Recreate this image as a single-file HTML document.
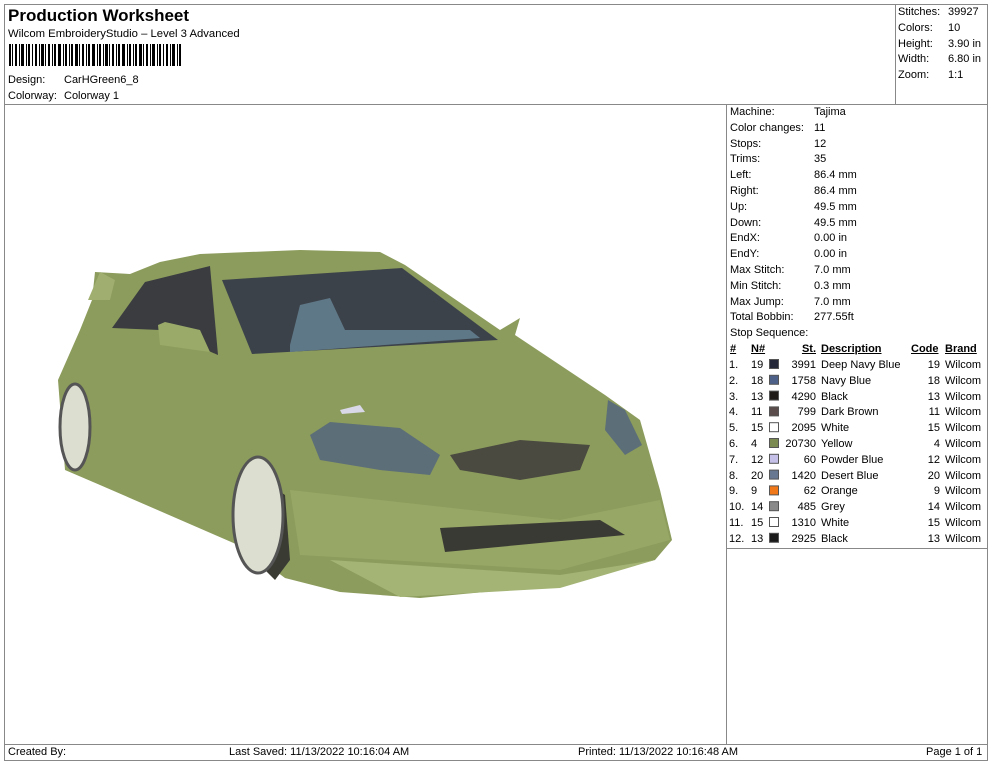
<!DOCTYPE html>
<html><head><meta charset="utf-8"><style>
*{margin:0;padding:0;box-sizing:border-box}
body{width:990px;height:762px;background:#fff;font-family:"Liberation Sans",Arial,sans-serif;color:#000;position:relative;overflow:hidden;font-size:11px}
.a{position:absolute;white-space:nowrap}
.l{position:absolute;background:#888}
.t{position:absolute;font-size:11px;line-height:15.8px}
.r{text-align:right}
u{text-decoration:underline}
</style></head><body>
<div class="l" style="left:4px;top:4px;width:984px;height:1px"></div>
<div class="l" style="left:4px;top:4px;width:1px;height:757px"></div>
<div class="l" style="left:987px;top:4px;width:1px;height:757px"></div>
<div class="l" style="left:4px;top:760px;width:984px;height:1px"></div>
<div class="l" style="left:4px;top:104px;width:984px;height:1px"></div>
<div class="l" style="left:895px;top:4px;width:1px;height:100px"></div>
<div class="l" style="left:726px;top:104px;width:1px;height:640px"></div>
<div class="l" style="left:726px;top:548px;width:262px;height:1px"></div>
<div class="l" style="left:4px;top:744px;width:984px;height:1px"></div>

<div class="a" style="left:8px;top:6px;font-size:17px;font-weight:bold">Production Worksheet</div>
<div class="a" style="left:8px;top:28px;font-size:11.3px">Wilcom EmbroideryStudio – Level 3 Advanced</div>
<svg class="a" style="left:9px;top:44px" width="174" height="22">
<g fill="#000">
<rect x="0" y="0" width="2" height="22"/><rect x="3" y="0" width="1" height="22"/><rect x="6" y="0" width="2" height="22"/><rect x="10" y="0" width="1" height="22"/><rect x="12" y="0" width="3" height="22"/><rect x="17" y="0" width="1" height="22"/><rect x="19" y="0" width="2" height="22"/><rect x="23" y="0" width="1" height="22"/><rect x="26" y="0" width="2" height="22"/><rect x="30" y="0" width="1" height="22"/><rect x="32" y="0" width="3" height="22"/><rect x="36" y="0" width="1" height="22"/><rect x="39" y="0" width="2" height="22"/><rect x="43" y="0" width="1" height="22"/><rect x="45" y="0" width="2" height="22"/><rect x="49" y="0" width="3" height="22"/><rect x="54" y="0" width="1" height="22"/><rect x="56" y="0" width="2" height="22"/><rect x="60" y="0" width="1" height="22"/><rect x="62" y="0" width="2" height="22"/><rect x="66" y="0" width="3" height="22"/><rect x="70" y="0" width="1" height="22"/><rect x="73" y="0" width="2" height="22"/><rect x="77" y="0" width="1" height="22"/><rect x="79" y="0" width="2" height="22"/><rect x="83" y="0" width="3" height="22"/><rect x="88" y="0" width="1" height="22"/><rect x="90" y="0" width="2" height="22"/><rect x="94" y="0" width="1" height="22"/><rect x="96" y="0" width="3" height="22"/><rect x="100" y="0" width="1" height="22"/><rect x="103" y="0" width="2" height="22"/><rect x="107" y="0" width="1" height="22"/><rect x="109" y="0" width="2" height="22"/><rect x="113" y="0" width="3" height="22"/><rect x="118" y="0" width="1" height="22"/><rect x="120" y="0" width="2" height="22"/><rect x="124" y="0" width="1" height="22"/><rect x="126" y="0" width="2" height="22"/><rect x="130" y="0" width="3" height="22"/><rect x="134" y="0" width="1" height="22"/><rect x="137" y="0" width="2" height="22"/><rect x="141" y="0" width="1" height="22"/><rect x="143" y="0" width="3" height="22"/><rect x="148" y="0" width="1" height="22"/><rect x="150" y="0" width="2" height="22"/><rect x="154" y="0" width="1" height="22"/><rect x="157" y="0" width="2" height="22"/><rect x="161" y="0" width="1" height="22"/><rect x="163" y="0" width="3" height="22"/><rect x="168" y="0" width="1" height="22"/><rect x="170" y="0" width="2" height="22"/>
</g></svg>
<div class="a" style="left:8px;top:74px">Design:</div><div class="a" style="left:64px;top:74px">CarHGreen6_8</div>
<div class="a" style="left:8px;top:90px">Colorway:</div><div class="a" style="left:64px;top:90px">Colorway 1</div>

<div class="t" style="left:898px;top:5px">Stitches:<br>Colors:<br>Height:<br>Width:<br>Zoom:</div>
<div class="t" style="left:948px;top:5px">39927<br>10<br>3.90 in<br>6.80 in<br>1:1</div>

<div class="t" style="left:730px;top:105px">Machine:<br>Color changes:<br>Stops:<br>Trims:<br>Left:<br>Right:<br>Up:<br>Down:<br>EndX:<br>EndY:<br>Max Stitch:<br>Min Stitch:<br>Max Jump:<br>Total Bobbin:<br>Stop Sequence:</div>
<div class="t" style="left:814px;top:105px">Tajima<br>11<br>12<br>35<br>86.4 mm<br>86.4 mm<br>49.5 mm<br>49.5 mm<br>0.00 in<br>0.00 in<br>7.0 mm<br>0.3 mm<br>7.0 mm<br>277.55ft</div>

<div class="t" style="left:730px;top:342px;font-weight:bold"><u>#</u><br></div>
<div class="t" style="left:751px;top:342px;font-weight:bold"><u>N#</u></div>
<div class="t r" style="left:780px;top:342px;width:36px;font-weight:bold"><u>St.</u></div>
<div class="t" style="left:821px;top:342px;font-weight:bold"><u>Description</u></div>
<div class="t" style="left:911px;top:342px;font-weight:bold"><u>Code</u></div>
<div class="t" style="left:945px;top:342px;font-weight:bold"><u>Brand</u></div>

<div class="t" style="left:729px;top:358px">1.<br>2.<br>3.<br>4.<br>5.<br>6.<br>7.<br>8.<br>9.<br>10.<br>11.<br>12.</div>
<div class="t" style="left:751px;top:358px">19<br>18<br>13<br>11<br>15<br>4<br>12<br>20<br>9<br>14<br>15<br>13</div>
<div class="t r" style="left:780px;top:358px;width:36px">3991<br>1758<br>4290<br>799<br>2095<br>20730<br>60<br>1420<br>62<br>485<br>1310<br>2925</div>
<div class="t" style="left:821px;top:358px">Deep Navy Blue<br>Navy Blue<br>Black<br>Dark Brown<br>White<br>Yellow<br>Powder Blue<br>Desert Blue<br>Orange<br>Grey<br>White<br>Black</div>
<div class="t r" style="left:910px;top:358px;width:30px">19<br>18<br>13<br>11<br>15<br>4<br>12<br>20<br>9<br>14<br>15<br>13</div>
<div class="t" style="left:945px;top:358px">Wilcom<br>Wilcom<br>Wilcom<br>Wilcom<br>Wilcom<br>Wilcom<br>Wilcom<br>Wilcom<br>Wilcom<br>Wilcom<br>Wilcom<br>Wilcom</div>
<svg class="a" style="left:769px;top:357px" width="12" height="190">
<g stroke="#555" stroke-width="1">
<rect x="0.5" y="2.5" width="9" height="9" fill="#252838"/>
<rect x="0.5" y="18.3" width="9" height="9" fill="#4c6088"/>
<rect x="0.5" y="34.1" width="9" height="9" fill="#1e1a18"/>
<rect x="0.5" y="49.9" width="9" height="9" fill="#5a4c4a"/>
<rect x="0.5" y="65.7" width="9" height="9" fill="#fff"/>
<rect x="0.5" y="81.5" width="9" height="9" fill="#7a8a50"/>
<rect x="0.5" y="97.3" width="9" height="9" fill="#c4c0e8"/>
<rect x="0.5" y="113.1" width="9" height="9" fill="#687890"/>
<rect x="0.5" y="128.9" width="9" height="9" fill="#f07818"/>
<rect x="0.5" y="144.7" width="9" height="9" fill="#8a8a8a"/>
<rect x="0.5" y="160.5" width="9" height="9" fill="#fff"/>
<rect x="0.5" y="176.3" width="9" height="9" fill="#1a1a1a"/>
</g></svg>

<svg class="a" style="left:0;top:0" width="726" height="744">
<path d="M160,262 L200,254 L300,250 L380,252 L405,265 L500,330 L520,318 L515,335 L605,395 L640,420 L660,490 L672,540 L655,560 L560,585 L420,598 L340,592 L285,578 L245,548 L100,485 L65,470 L58,380 L80,330 L92,300 L95,272 L130,274 Z" fill="#8c9c5c"/>
<path d="M100,272 L88,300 L110,300 L115,280 Z" fill="#a0ae70"/>
<path d="M222,280 L402,268 L498,340 L252,354 Z" fill="#3c424a"/>
<path d="M290,345 L300,305 L330,298 L345,330 L470,330 L480,338 L290,352 Z" fill="#5f7888"/>
<path d="M112,328 L145,282 L210,266 L218,355 L160,330 Z" fill="#3a3c40"/>
<path d="M158,325 L165,322 L200,330 L210,352 L160,345 Z" fill="#9aaa68"/>
<path d="M240,545 L255,475 L285,495 L290,560 L275,580 Z" fill="#3a3c34"/>
<ellipse cx="258" cy="515" rx="25" ry="58" fill="#dcdfd0" stroke="#555" stroke-width="3"/>
<ellipse cx="75" cy="427" rx="15" ry="43" fill="#dcdfd0" stroke="#555" stroke-width="3"/>
<path d="M310,435 L330,422 L400,428 L440,455 L430,475 L380,470 L320,460 Z" fill="#5c6e78"/>
<path d="M608,400 L625,410 L642,445 L625,455 L605,430 Z" fill="#5c6e78"/>
<path d="M450,455 L520,440 L590,445 L580,470 L520,480 L460,470 Z" fill="#4a4a40"/>
<path d="M290,490 L560,520 L660,500 L670,540 L560,570 L300,555 Z" fill="#97a766"/>
<path d="M440,528 L600,520 L625,535 L445,552 Z" fill="#3a3a34"/>
<path d="M330,560 L560,575 L655,560 L560,588 L400,597 Z" fill="#a4b474"/>
<path d="M340,410 L360,405 L365,412 L342,414 Z" fill="#d8d8e8"/>
</svg>

<div class="a" style="left:8px;top:746px;font-size:11px">Created By:</div>
<div class="a" style="left:229px;top:746px;font-size:11px">Last Saved: 11/13/2022 10:16:04 AM</div>
<div class="a" style="left:578px;top:746px;font-size:11px">Printed: 11/13/2022 10:16:48 AM</div>
<div class="a" style="left:926px;top:746px;font-size:11px">Page 1 of 1</div>
</body></html>
